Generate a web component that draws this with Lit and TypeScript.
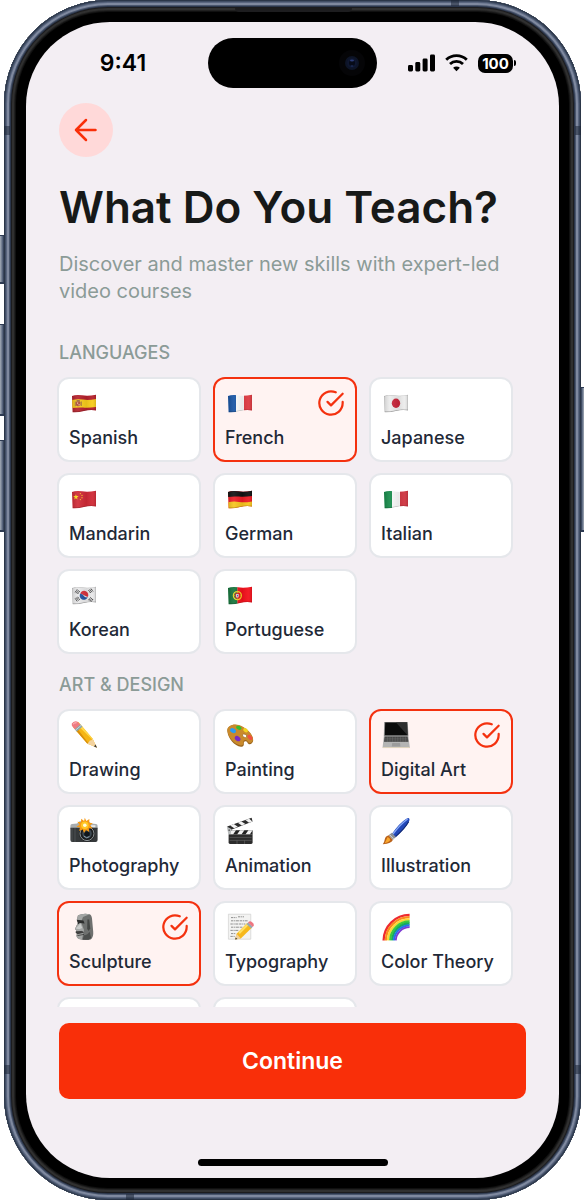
import { LitElement, html, css, svg, nothing } from "lit";
import { customElement, state, property } from "lit/decorators.js";
import { classMap } from "lit/directives/class-map.js";

/* ---------- flag artwork ---------- */

const FLAG_SHAPE = "M3 7 Q7 5.4 13 6.3 T27 5.8 L27 21.4 Q21 20.4 15 22 T3.6 23.2 Z";

// a horizontal band that follows the wave of the cloth
const band = (y: number, h: number, fill: string) =>
  svg`<path d="M2 ${y + 0.6} Q8 ${y - 1} 14 ${y} T28 ${y - 0.8} V${y + h - 0.8} Q20 ${y + h + 0.6} 14 ${y + h} T2 ${y + h + 0.6} Z" fill=${fill}/>`;

const flag = (id: string, body: unknown) => svg`
  <defs>
    <clipPath id="c-${id}"><path d=${FLAG_SHAPE}/></clipPath>
    <linearGradient id="g-${id}" x1="0" x2="1" y1="0" y2="0">
      <stop offset="0" stop-color="#000" stop-opacity=".14"/>
      <stop offset=".25" stop-color="#fff" stop-opacity=".08"/>
      <stop offset=".6" stop-color="#000" stop-opacity=".07"/>
      <stop offset=".85" stop-color="#fff" stop-opacity=".05"/>
      <stop offset="1" stop-color="#000" stop-opacity=".12"/>
    </linearGradient>
  </defs>
  <g clip-path="url(#c-${id})">
    ${body}
    <path d=${FLAG_SHAPE} fill="url(#g-${id})"/>
    <path d="M3.6 23 Q9 23.2 15 21.8 T27 21.2" fill="none" stroke="#000" stroke-opacity=".25" stroke-width=".8"/>
  </g>`;

const columns = (a: string, b: string, c: string) => svg`
  <rect x="2" y="4" width="9" height="21" fill=${a}/>
  <rect x="11" y="4" width="8" height="21" fill=${b}/>
  <rect x="19" y="4" width="9" height="21" fill=${c}/>`;

const ART: Record<string, unknown> = {
  spain: flag("es", svg`
    <rect x="2" y="4" width="26" height="21" fill="#b5202b"/>
    ${band(10.6, 8, "#f8cd1b")}
    <rect x="7" y="12.2" width="4.4" height="5" rx="1.4" fill="#b04a3a"/>
    <path d="M7.6 11h3.2v1.4H7.6zM5.8 12.6h.9v4.6h-.9zM11.8 12.4h.9v4.6h-.9z" fill="#9c6a3f"/>
    <path d="M8 13.4h1.1v1.4H8zM9.6 15h1v1.4h-1z" fill="#e9c9a0"/>`),
  france: flag("fr", columns("#1653a3", "#fbfbfb", "#dd3a42")),
  japan: flag("jp", svg`
    <rect x="2" y="4" width="26" height="21" fill="#ececec"/>
    <ellipse cx="15" cy="14.3" rx="4.2" ry="4.7" fill="#c8253a"/>
    <path d=${FLAG_SHAPE} fill="none" stroke="#aaa" stroke-width=".6"/>`),
  china: flag("cn", svg`
    <rect x="2" y="4" width="26" height="21" fill="#d02a36"/>
    <path d="M6.9 9.2l.7 1.9h2l-1.6 1.3.6 2-1.7-1.2-1.7 1.2.6-2-1.6-1.3h2z" fill="#ffe01b"/>
    <circle cx="11.4" cy="8.6" r=".7" fill="#f6b921"/><circle cx="13" cy="10.4" r=".7" fill="#f6b921"/>
    <circle cx="13" cy="12.8" r=".7" fill="#f6b921"/><circle cx="11.4" cy="14.6" r=".7" fill="#f6b921"/>`),
  germany: flag("de", svg`
    <rect x="2" y="4" width="26" height="21" fill="#ee1c25"/>
    ${band(0, 11.6, "#111")}
    ${band(17, 9, "#f7c51e")}`),
  italy: flag("it", columns("#158a49", "#fafafa", "#cf3440")),
  korea: flag("kr", svg`
    <rect x="2" y="4" width="26" height="21" fill="#e9e9ea"/>
    <path d="M11.3 12.6a4.1 4.1 0 1 1 7.4 3.4z" fill="#d8323d"/>
    <path d="M11.3 12.6a4.1 4.1 0 1 0 7.4 3.4q-1.4 .9-2.8 0t-1.6-1.7-3-1.7z" fill="#23529f"/>
    <g stroke="#333" stroke-width="1" stroke-dasharray="1.7 .4">
      <path d="M6.2 11.4l2-3M7.4 12.2l2-3M8.6 13l2-3"/>
      <path d="M19.6 9.2l2 2.8M20.8 8.4l2 2.8M22 7.6l2 2.8"/>
      <path d="M6.2 17.4l2 3M7.4 16.6l2 3M8.6 15.8l2 3"/>
      <path d="M19.6 19.2l2-2.8M20.8 20l2-2.8M22 20.8l2-2.8"/>
    </g>
    <path d=${FLAG_SHAPE} fill="none" stroke="#aaa" stroke-width=".6"/>`),
  portugal: flag("pt", svg`
    <rect x="2" y="4" width="10.6" height="21" fill="#14733a"/>
    <rect x="12.4" y="4" width="16" height="21" fill="#f3111c"/>
    <circle cx="12.4" cy="14.6" r="4" fill="none" stroke="#f2cf23" stroke-width="1.3"/>
    <path d="M8.6 14.6h7.6M12.4 10.6v8" stroke="#d9a916" stroke-width=".6"/>
    <path d="M10.2 12.2h4.4v3.6q0 1.8-2.2 1.8t-2.2-1.8z" fill="#d51f2a"/>
    <path d="M11.2 13h2.4v2.4q0 1.2-1.2 1.2t-1.2-1.2z" fill="#f2f2f2"/>
    <path d="M12 13.8h.9v1.8H12z" fill="#3353a0"/>`),

  /* ---------- object artwork ---------- */
  pencil: svg`
    <path d="M3.6 5.5L9.4 1 23.5 17.6 28 26.8 18.2 22.4z" fill="#f5b515"/>
    <path d="M7.4 10L18.2 22.4l2.2 1L9 8.6z" fill="#d88e0b"/>
    <path d="M11 6.8L12.6 4.8 23.5 17.6l.8 2z" fill="#ffd84b"/>
    <path d="M18.2 22.4l1.6-1.2 1-1.6 1.7-.4 1-1.6L28 26.8z" fill="#f3d3a0"/>
    <path d="M25 25.4l1.6-2 1.4 3.4z" fill="#3a3a3a"/>
    <path d="M5.6 8L11.2 3.2l2.2 2.5-5.7 4.8z" fill="#8ba3ad"/>
    <path d="M6.6 9.1l5.6-4.8" stroke="#d6e2e6" stroke-width=".8"/>
    <path d="M2.8 4.4Q2 2.4 4.4 1.1T8.6.8L11.2 3.4 5.6 8.2z" fill="#ef7b82"/>
    <path d="M4 3.2Q5.6 1.4 7.6 1.8" stroke="#ffc0c2" stroke-width="1" fill="none"/>`,
  palette: svg`
    <path d="M2.4 10.5C1.6 5 8.6 2.6 14 4.4c7 2.2 14.4 9.4 14.2 14.8-.1 2.2-1.8 4-3.6 4-2 0-2-2.6-3.6-3-1.8-.4-2.4 1-2.2 2.6.2 1.8-.6 3.2-2.8 2.9C9.4 25 3.2 17.6 2.4 10.5z" fill="#9a651c"/>
    <path d="M2.4 9.6C1.8 4.6 8.6 2.2 14 4c6.8 2.2 14.2 9 14 14.4-.1 2-1.6 3.6-3.2 3.6-2 0-2.2-2.6-3.8-3-2-.4-2.8 1-2.6 2.6.2 1.8-.6 3-2.6 2.8C9.6 23.8 3 16.6 2.4 9.6z" fill="#c98a2c"/>
    <ellipse cx="19.6" cy="14.8" rx="2.2" ry="1.5" transform="rotate(30 19.6 14.8)" fill="#fff" stroke="#8d5b16" stroke-width=".5"/>
    <ellipse cx="8" cy="9.6" rx="3.1" ry="2.2" transform="rotate(30 8 9.6)" fill="#2b9df0"/>
    <ellipse cx="13.8" cy="6.8" rx="2.8" ry="1.9" transform="rotate(20 13.8 6.8)" fill="#35bf2b"/>
    <ellipse cx="20.6" cy="9.2" rx="2.6" ry="1.9" transform="rotate(35 20.6 9.2)" fill="#f2d31f"/>
    <ellipse cx="25" cy="16.4" rx="3" ry="1.9" transform="rotate(50 25 16.4)" fill="#f0503f"/>
    <ellipse cx="12.6" cy="17.6" rx="3.1" ry="2.3" transform="rotate(35 12.6 17.6)" fill="#7b2bc4"/>`,
  laptop: svg`
    <path d="M3.2 1h23.6l.6 14H2.8z" fill="#8a8a8a"/>
    <path d="M4.2 1.4h21.8l.5 12.8H3.8z" fill="#0b0b0b"/>
    <path d="M15 1.4h11l.5 12.8z" fill="#2e2e2e"/>
    <path d="M2.8 15h24.6l1.4 11.2q.1.9-1 .9H2.6q-1.1 0-1-.9z" fill="#b4b4b4"/>
    <path d="M3.6 15.4h23l.8 5.4H3z" fill="#3d3d3d"/>
    <path d="M3.6 17.2h23.2M3.4 19h23.6" stroke="#8d8d8d" stroke-width=".4"/>
    <path d="M6.4 15.4v5.4M9 15.4v5.4M11.6 15.4v5.4M14.2 15.4v5.4M16.8 15.4v5.4M19.4 15.4v5.4M22 15.4v5.4M24.4 15.4v5.4" stroke="#8d8d8d" stroke-width=".3"/>
    <path d="M11.2 22h7.8l.4 3.6h-8.6z" fill="#9c9c9c"/>
    <path d="M1.8 26.6h26.8" stroke="#e3d5bd" stroke-width="1"/>`,
  camera: svg`
    <path d="M1.4 8.8q0-1.6 1.6-1.8l5-.4 2.6-2.4h9l2.6 2.4 4.8.4q1.6.2 1.6 1.8v3H1.4z" fill="#a9adaf"/>
    <path d="M1.4 10.8h27.2V23q0 2-2 2H3.4q-2 0-2-2z" fill="#35383a"/>
    <path d="M3 11v13.6M6 11v14" stroke="#54585a" stroke-width=".8"/>
    <path d="M22 8.2h4.4v2H22z" fill="#e6e8e8"/>
    <circle cx="18" cy="16.6" r="8" fill="#1b1d1e"/>
    <circle cx="18" cy="16.6" r="7" fill="none" stroke="#8e9496" stroke-width="1"/>
    <circle cx="18" cy="16.6" r="4.8" fill="#3c4851"/>
    <circle cx="18" cy="17" r="2.8" fill="#10161b"/>
    <path d="M14.8 19q2.6 3.2 5.6.6" stroke="#8aa0ae" stroke-width="1" fill="none"/>
    <path d="M15.8 .8l1.5 3.3 3.1-2-.2 3.7 3.6.4-2.8 2.4 2.6 2.6-3.8.2.4 3.700-3.200-2.100-2 2.900-1.300-3.400-3.500 1.500.8-3.600-3.600-.7 3.100-2-2.100-3 3.600.6.2-3.500 2.900 2.300z" fill="#f79a12"/>
    <circle cx="15.8" cy="8.2" r="3.8" fill="#ffc824"/>
    <circle cx="15.8" cy="8.2" r="1.8" fill="#fffbe0"/>`,
  clapper: svg`
    <path d="M2.2 9.4L26.6.8l1 3.6L4.2 13.4z" fill="#2b2b2b"/>
    <path d="M5.2 8.4l4 2.8 3.600-1.400-4-2.700zM12.800 5.700l4 2.700 3.600-1.300-4-2.700zM20.400 3l3.600 2.700 3.400-1.300-3.200-2.700z" fill="#f2f2f2"/>
    <path d="M3.800 13.200h23.800v4.400H3.800z" fill="#222"/>
    <path d="M6.600 13.200h4.400l-3 4.400H3.800zM15 13.200h4.400l-3 4.400H12zM23.400 13.200h4.200l-2.800 4.400h-4.400z" fill="#f1f1f1"/>
    <path d="M1.800 9.600l4.400 2.400-.4 5.200-2.600-.4z" fill="#b9bcbd"/>
    <circle cx="4.200" cy="13.200" r=".9" fill="#666"/>
    <path d="M3.600 17.600h24v8q0 1.400-1.400 1.400H5q-1.400 0-1.400-1.400z" fill="#2c2c2c"/>
    <path d="M4.600 20.400h22M4.600 23.400h22M12 23.400V27M19.600 23.400V27" stroke="#747474" stroke-width=".5"/>`,
  brush: svg`
    <path d="M10.400 17.600Q18.600 5.800 25.400 1.800q2-1.200 2.800-.4t-.2 3.200Q24.200 12 13.600 21z" fill="#2147b8"/>
    <path d="M12 17Q19.600 7 26.600 2" stroke="#86a8f6" stroke-width="1.400" fill="none"/>
    <path d="M14.600 19.600Q24 11.400 27.600 4.800" stroke="#122a72" stroke-width="1.100" fill="none"/>
    <path d="M7.600 18.200l3.200-2.400 4 4.200-3 3z" fill="#8e9295"/>
    <path d="M8.800 18l3.800 3.800" stroke="#dcdfe0" stroke-width=".9"/>
    <path d="M7.600 18.200l4.200 4.800q-1 3.600-10 4.200 1.600-2.200 2-5t3.800-4z" fill="#b9611a"/>
    <path d="M6.600 20q2.400.8 2.800 3.200-1.600 2.200-5.600 3 1-2.400 2.800-6.200z" fill="#f9a72c"/>`,
  moai: svg`
    <path d="M9 2.200Q14.600-.2 20.600 1.200q2 .6 2.400 4.400l1.200 13q.6 6-2.600 7.800-6 1.400-11.600-.4-2.400-1-2.600-3.200l.6-2.200-1.400-1.200.8-2-1.400-1.400L9 9.400 7.800 7z" fill="#6e706f"/>
    <path d="M9 2.200Q14.600-.2 20.600 1.200L14 4 12 9l3 8-2 9.600-3-.6q-2.400-1-2.600-3.200l.6-2.200-1.400-1.200.8-2-1.400-1.400L9 9.400 7.800 7z" fill="#a3a5a4"/>
    <path d="M7.800 6.800l6.600.8 1.200 3-4.800-.6-1.600 1.200z" fill="#2c2d2d"/>
    <path d="M11.400 10.600l1.800 4.400-3 1.200-3.600-.6z" fill="#c9cbca"/>
    <path d="M7 18.800l6-.4 1.400 1-6.200 1.400zM8.400 22.600l6.600-1.200" stroke="#333" stroke-width=".8" fill="#444"/>
    <path d="M18.400 6.600l1.800 0 1 8.600-1.400 2.800-1.600-2z" fill="#434544"/>
    <path d="M15 22q3 1 5.600-3.200l1.600 6.200-2.600 1.800h-6z" fill="#4c4e4d"/>`,
  memo: svg`
    <path d="M3.400 1.200h22.400v25H3.400z" fill="#f3f3f2" stroke="#c9c9c9" stroke-width=".6"/>
    <g stroke="#858585" stroke-width=".9" stroke-dasharray="2.400 .7 1.200 .6 3 .8">
      <path d="M6 4.600h5.600M13 3.800h6M6 7.800h17M5.400 11h15M6 14.200h12M5.400 17.400h8M6 20.600h4.600M5.400 23.400h5"/>
    </g>
    <path d="M10.200 26.600l1.400-5.800L22.200 10l4.800 4.400-11.200 11z" fill="#f6b81c"/>
    <path d="M13.400 19.200L22.600 10l1.600 1.400-9.400 9.600z" fill="#ffdf62"/>
    <path d="M10.200 26.600l1.400-5.800 4.200 4.600z" fill="#efcf9c"/>
    <path d="M10.200 26.600l.5-2.200 1.700 1.600z" fill="#333"/>
    <path d="M21.400 11l1.800-1.600 4.600 4.400-1.600 1.600z" fill="#96a9b1"/>
    <path d="M23 9.600q1.400-1.800 3-1.200t2.600 2.400-.8 3.200z" fill="#ef7680"/>`,
  rainbow: svg`
    <g fill="none" stroke-width="2.300">
      <path d="M2.600 27.400A26 26 0 0 1 28.600 1.900" stroke="#ee2a2f"/>
      <path d="M4.800 27.400A23.800 23.800 0 0 1 28.600 4.100" stroke="#fb8a1d"/>
      <path d="M7 27.400A21.600 21.600 0 0 1 28.600 6.300" stroke="#fdd835"/>
      <path d="M9.200 27.400A19.400 19.400 0 0 1 28.600 8.500" stroke="#3fcb3a"/>
      <path d="M11.200 27.400A17.400 17.400 0 0 1 28.600 10.500" stroke="#16ad5c"/>
      <path d="M13 27.400A15.600 15.600 0 0 1 28.600 12.400" stroke="#2474ea"/>
      <path d="M14.800 27.400A13.800 13.800 0 0 1 28.600 14.200" stroke="#7d3bd3" stroke-width="1.800"/>
    </g>`,
};

interface Subject { name: string; art: string; }
interface Group { title: string; items: Subject[]; upcoming: number; }

const GROUPS: Group[] = [
  {
    title: "LANGUAGES",
    upcoming: 0,
    items: [
      { name: "Spanish", art: "spain" },
      { name: "French", art: "france" },
      { name: "Japanese", art: "japan" },
      { name: "Mandarin", art: "china" },
      { name: "German", art: "germany" },
      { name: "Italian", art: "italy" },
      { name: "Korean", art: "korea" },
      { name: "Portuguese", art: "portugal" },
    ],
  },
  {
    title: "ART & DESIGN",
    upcoming: 2,
    items: [
      { name: "Drawing", art: "pencil" },
      { name: "Painting", art: "palette" },
      { name: "Digital Art", art: "laptop" },
      { name: "Photography", art: "camera" },
      { name: "Animation", art: "clapper" },
      { name: "Illustration", art: "brush" },
      { name: "Sculpture", art: "moai" },
      { name: "Typography", art: "memo" },
      { name: "Color Theory", art: "rainbow" },
    ],
  },
];

@customElement("subject-card")
class SubjectCard extends LitElement {
  @property() name = "";
  @property() art = "";
  @property({ type: Boolean }) selected = false;

  static styles = css`
    :host { display: block; }
    .card {
      box-sizing: border-box;
      display: flex;
      flex-direction: column;
      gap: 9px;
      padding: 10px;
      border: 2px solid #e5e7eb;
      border-radius: 12px;
      background: #fff;
      cursor: pointer;
    }
    .card.selected { border-color: #f4310f; background: #fff3f2; }
    .top { display: flex; justify-content: space-between; height: 28px; }
    .art { width: 30px; height: 28px; overflow: visible; }
    .mark { display: grid; width: 28px; height: 28px; color: #f4310f; }
    .mark > * { grid-area: 1 / 1; }
    .box { appearance: none; width: 28px; height: 28px; margin: 0; outline-offset: 2px; border-radius: 14px; cursor: pointer; }
    .tick { pointer-events: none; }
    .name { font-size: 18px; line-height: 24px; font-weight: 500; color: #1f2937; white-space: nowrap; }
  `;

  private toggle() {
    this.dispatchEvent(new CustomEvent("subject-toggle", { detail: this.name, bubbles: true, composed: true }));
  }

  render() {
    return html`
      <label class=${classMap({ card: true, selected: this.selected })}>
        <span class="top">
          <svg class="art" viewBox="0 0 30 28" aria-hidden="true">${ART[this.art]}</svg>
          <span class="mark">
            <input class="box" type="checkbox" .checked=${this.selected} @change=${this.toggle} />
            ${this.selected
              ? html`<svg class="tick" width="28" height="28" viewBox="0 0 24 24" fill="none" stroke="currentColor"
                  stroke-width="1.9" stroke-linecap="round" stroke-linejoin="round" aria-hidden="true">
                  <path d="M22 11.08V12a10 10 0 1 1-5.93-9.14" /><path d="M22 4L12 14.01l-3-3" />
                </svg>`
              : nothing}
          </span>
        </span>
        <span class="name">${this.name}</span>
      </label>`;
  }
}

@customElement("status-bar")
class StatusBar extends LitElement {
  static styles = css`
    :host { display: block; padding-top: 16px; color: #000; }
    .bar { display: grid; grid-template-columns: 1fr 169px 1fr; align-items: center; height: 50px; }
    .time { padding-left: 12px; text-align: center; font-size: 23px; line-height: 28px; font-weight: 600; }
    .island {
      display: flex; align-items: center; justify-content: flex-end;
      height: 50px; padding-right: 12px; box-sizing: border-box; border-radius: 25px; background: #000;
    }
    .right { display: flex; align-items: center; justify-content: center; gap: 10px; padding-right: 12px; }
    .battery { display: flex; align-items: center; gap: 1px; }
    .level {
      width: 35px; height: 19px; border-radius: 7px; background: #000; color: #fff;
      font-size: 15px; line-height: 19px; font-weight: 700; text-align: center;
    }
    .nub { width: 2px; height: 6px; border-radius: 0 2px 2px 0; background: #000; }
  `;

  render() {
    return html`
      <div class="bar">
        <div class="time">9:41</div>
        <div class="island">
          <svg width="26" height="26" viewBox="0 0 26 26" aria-hidden="true">
            <circle cx="13" cy="13" r="13" fill="#050507" /><circle cx="13" cy="13" r="7" fill="#0d1426" />
            <circle cx="13" cy="13" r="5" fill="#0f1730" /><circle cx="13" cy="13" r="3" fill="#070b18" />
            <ellipse cx="13" cy="10.5" rx="2" ry="1" fill="#2b3c78" /><ellipse cx="13" cy="16" rx="1.5" ry=".8" fill="#1f2d5c" />
          </svg>
        </div>
        <div class="right">
          <svg width="27" height="18" viewBox="0 0 27 18" aria-hidden="true">
            <rect x="0" y="11" width="5" height="6.5" rx="1.4" /><rect x="7.3" y="8" width="5" height="9.5" rx="1.4" />
            <rect x="14.6" y="4.5" width="5" height="13" rx="1.4" /><rect x="22" y=".5" width="5" height="17" rx="1.4" />
          </svg>
          <svg width="23" height="18" viewBox="0 0 23 18" fill="none" stroke="#000" stroke-width="2.8" aria-hidden="true">
            <path d="M1.2 5.800a14.800 14.800 0 0 1 20.600 0" /><path d="M5 9.900a9.400 9.400 0 0 1 13 0" />
            <path d="M11.5 17.200l-3.400-3.400a4.900 4.900 0 0 1 6.800 0z" fill="#000" stroke="none" />
          </svg>
          <div class="battery"><div class="level">100</div><div class="nub"></div></div>
        </div>
      </div>`;
  }
}

@customElement("app-root")
class AppRoot extends LitElement {
  @state() private chosen = new Set(["French", "Digital Art", "Sculpture"]);

  static styles = css`
    :host {
      display: grid;
      grid-template-columns: 4px minmax(0, 1fr) 3px;
      height: 100vh;
      background: #fff;
      font-family: Inter, "Liberation Sans", sans-serif;
    }
    .rail { display: flex; flex-direction: column; }
    .rail.left { padding-top: 235px; }
    .rail.right { padding-top: 387px; }
    .key {
      box-sizing: border-box;
      border: solid #2d3a52;
      border-width: 1px 0 2px;
      background: linear-gradient(90deg, #a5adb8, #5b6880 60%, #29354b);
    }
    .right .key { background: linear-gradient(90deg, #29354b, #5b6880 40%, #a5adb8); }
    .action { height: 49px; margin-bottom: 40px; }
    .volume { height: 92px; margin-bottom: 24px; }
    .power { height: 145px; }

    .shell {
      position: relative;
      box-sizing: border-box;
      height: 100%;
      min-height: 0;
      padding: 22px;
      border-radius: 104px;
      background: #000;
      box-shadow:
        inset 0 0 0 1px #2b3648, inset 0 0 0 2px #414e65, inset 0 0 0 3px #5a667f,
        inset 0 0 0 5px #7f899f, inset 0 0 0 6px #4a566d, inset 0 0 0 7px #2a354a,
        inset 0 0 0 8px #1c1c1e, inset 0 0 0 10px #303030, inset 0 0 0 11px #202020, inset 0 0 0 12px #101010;
    }
    .speaker {
      position: absolute; top: 8px; left: 50%; width: 117px; height: 4px; margin-left: -58px;
      border-radius: 0 0 4px 4px; background: #1d1d1f;
    }
    .seam { position: absolute; background: rgba(30, 38, 54, 0.55); }
    .seam.side { width: 6px; height: 9px; }
    .seam.edge { width: 8px; height: 6px; }
    .seam.l { left: 0; }
    .seam.r { right: 0; }
    .seam.high { top: 126px; }
    .seam.low { bottom: 126px; }
    .seam.top { top: 0; right: 122px; }
    .seam.bottom { bottom: 0; left: 122px; }

    .screen {
      box-sizing: border-box;
      display: flex;
      flex-direction: column;
      height: 100%;
      overflow: hidden;
      border-radius: 84px;
      background: #f3eef3;
    }
    .intro { padding: 15px 32px 0 33px; }
    .back {
      display: grid; place-items: center; width: 54px; height: 54px; padding: 0;
      border: 0; border-radius: 27px; background: #ffd9d9; color: #f92f09; cursor: pointer;
    }
    h1 { margin: 22px 0 0; font-size: 44px; line-height: 56px; font-weight: 600; color: #171918; white-space: nowrap; }
    .lead { margin: 16px 0 0; font-size: 20px; line-height: 27px; color: #8b9b97; }
    .list { flex: 1; min-height: 0; margin-top: 36px; padding: 0 46px 0 31px; overflow-y: auto; scrollbar-width: none; }
    .group { margin-bottom: 19px; }
    h2 { margin: 0 2px 12px; font-size: 18px; line-height: 24px; font-weight: 500; color: #8b9b97; }
    .grid { display: grid; grid-template-columns: repeat(3, minmax(0, 1fr)); gap: 11px 12px; }
    .blank { box-sizing: border-box; height: 85px; border: 2px solid #e5e7eb; border-radius: 12px; background: #fff; }
    .actions { padding: 16px 33px 0; }
    .continue {
      display: block; width: 100%; height: 76px; border: 0; border-radius: 10px; background: #f92f09; color: #fff;
      font-family: inherit; font-size: 23px; line-height: 28px; font-weight: 600; cursor: pointer;
    }
    .home { width: 190px; height: 7px; margin: 60px auto 12px; border-radius: 4px; background: #000; }
  `;

  private onToggle(e: CustomEvent<string>) {
    const next = new Set(this.chosen);
    next.has(e.detail) ? next.delete(e.detail) : next.add(e.detail);
    this.chosen = next;
  }

  render() {
    return html`
      <div class="rail left">
        <div class="key action"></div>
        <div class="key volume"></div>
        <div class="key volume"></div>
      </div>
      <div class="shell">
        <div class="speaker"></div>
        <div class="seam side l high"></div><div class="seam side r high"></div>
        <div class="seam side l low"></div><div class="seam side r low"></div>
        <div class="seam edge top"></div><div class="seam edge bottom"></div>
        <main class="screen">
          <status-bar></status-bar>
          <header class="intro">
            <button class="back" type="button" aria-label="Back">
              <svg width="24" height="24" viewBox="0 0 24 24" fill="none" stroke="currentColor" stroke-width="2.5"
                stroke-linecap="round" stroke-linejoin="round" aria-hidden="true">
                <path d="M21.5 12H2M12 2L2 12l10 10" />
              </svg>
            </button>
            <h1>What Do You Teach?</h1>
            <p class="lead">Discover and master new skills with expert-led video courses</p>
          </header>
          <div class="list" @subject-toggle=${this.onToggle}>
            ${GROUPS.map((g) => html`
              <section class="group">
                <h2>${g.title}</h2>
                <div class="grid">
                  ${g.items.map((s) => html`
                    <subject-card .name=${s.name} .art=${s.art} .selected=${this.chosen.has(s.name)}></subject-card>`)}
                  ${Array.from({ length: g.upcoming }, () => html`<div class="blank" aria-hidden="true"></div>`)}
                </div>
              </section>`)}
          </div>
          <div class="actions"><button class="continue" type="button">Continue</button></div>
          <div class="home"></div>
        </main>
      </div>
      <div class="rail right"><div class="key power"></div></div>`;
  }
}
